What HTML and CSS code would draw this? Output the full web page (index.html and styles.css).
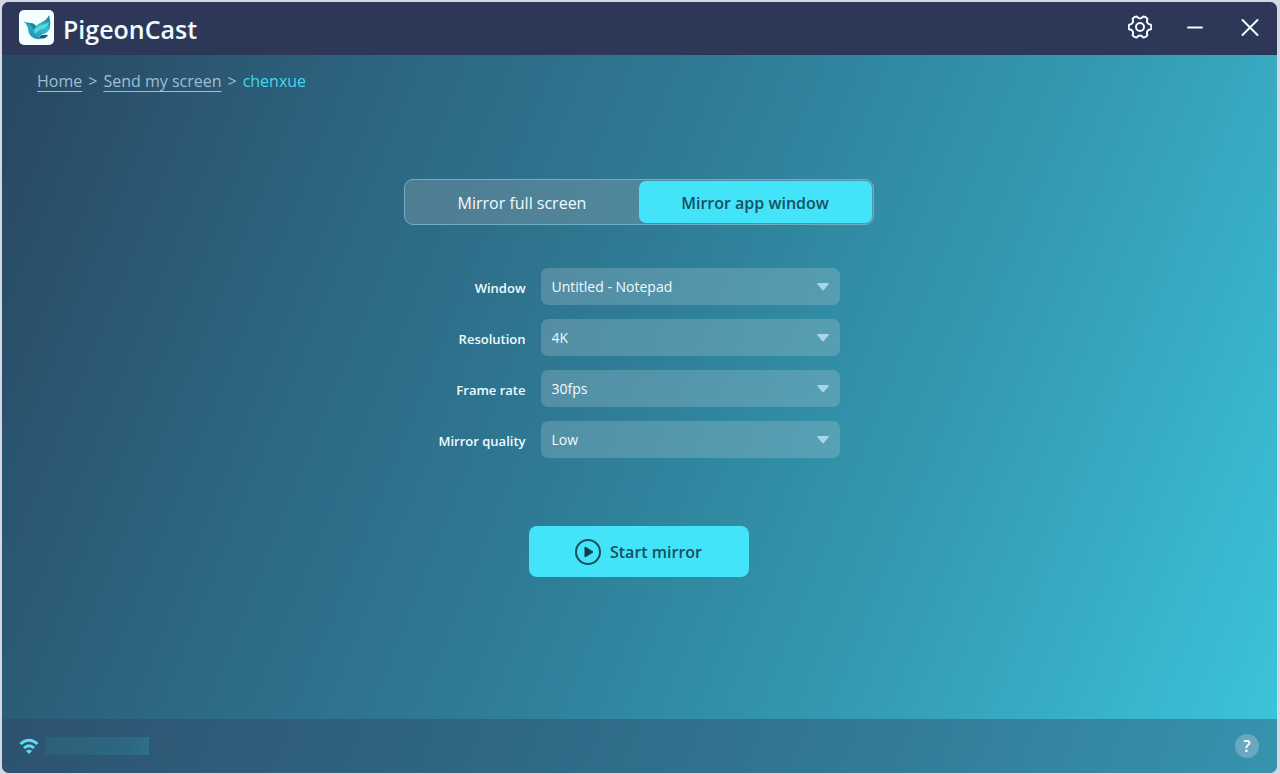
FILE: index.html
```
<!DOCTYPE html>
<html lang="en">
<head>
    <meta charset="UTF-8">
    <meta name="viewport" content="width=device-width, initial-scale=1.0">
    <title>PigeonCast</title>
    <link rel="stylesheet" href="styles.css">
</head>
<body>
    <div class="window">
        <header class="titlebar">
            <div class="brand">
                <svg class="logo" viewBox="0 0 35 35" aria-hidden="true">
                    <defs>
                        <linearGradient id="bird" x1="1" y1="0" x2="0.3" y2="1">
                            <stop offset="0" stop-color="#1a6f92"/>
                            <stop offset="0.45" stop-color="#36bccd"/>
                            <stop offset="1" stop-color="#1f8fac"/>
                        </linearGradient>
                    </defs>
                    <rect width="35" height="35" rx="5" fill="#f3feff"/>
                    <path d="M4 11q3 2 7 2 4 0 6 3 2-2 6-4 5-2 7-7 2 7 1 13-2 5-7 6-4 2-4 4 1 1 3 1-9 1-12-4-2-3-2-7-1-4-5-7z" fill="url(#bird)"/>
                    <path d="M4 11q3 2 7 2 4 0 6 3l-2 4q-3-6-11-9z" fill="#1c86a3"/>
                    <path d="M15 20q3-4 8-5 4-1 7-3-1 4-4 6-7 2-10 6-1-2-1-4z" fill="#5ad5de"/>
                    <path d="M20 28q1-4 9-3-3 5-9 3z" fill="#185b78"/>
                </svg>
                <h1>PigeonCast</h1>
            </div>
            <div class="window-buttons">
                <button type="button" aria-label="Settings">
                    <svg width="24" height="24" viewBox="0 0 24 24">
                        <path d="M22.86 9.69Q23.9 12 22.86 14.31 17.54 15.2 19.43 20.25 17.95 22.3 15.43 22.56 12 18.4 8.57 22.56 6.05 22.3 4.57 20.25 6.46 15.2 1.14 14.31.1 12 1.14 9.69 6.46 8.8 4.57 3.75 6.05 1.7 8.57 1.44 12 5.6 15.43 1.44 17.95 1.7 19.43 3.75 17.54 8.8 22.86 9.69z"/>
                        <circle cx="12" cy="12" r="4"/>
                    </svg>
                </button>
                <button type="button" aria-label="Minimize">
                    <svg width="24" height="24" viewBox="0 0 24 24"><path d="M5 12.500h14"/></svg>
                </button>
                <button type="button" aria-label="Close">
                    <svg width="24" height="24" viewBox="0 0 24 24"><path d="M4.500 5l15 15M19.500 5l-15 15"/></svg>
                </button>
            </div>
        </header>

        <main class="content">
            <nav class="breadcrumb" aria-label="Breadcrumb">
                <a href="#">Home</a>
                <span>&gt;</span>
                <a href="#">Send my screen</a>
                <span>&gt;</span>
                <span class="current">chenxue</span>
            </nav>

            <form class="mirror-form">
                <div class="tabs">
                    <button type="button">Mirror full screen</button>
                    <button type="button" class="active">Mirror app window</button>
                </div>

                <div class="fields">
                    <label for="window">Window</label>
                    <div class="select">
                        <select id="window"><option>Untitled - Notepad</option></select>
                        <svg width="12" height="8" viewBox="0 0 12 8"><path d="M1 0h10q1 0 .5 1.200l-4.500 5.500q-1 1-2 0L.5 1.200Q0 0 1 0z"/></svg>
                    </div>
                    <label for="resolution">Resolution</label>
                    <div class="select">
                        <select id="resolution"><option>4K</option></select>
                        <svg width="12" height="8" viewBox="0 0 12 8"><path d="M1 0h10q1 0 .5 1.200l-4.500 5.500q-1 1-2 0L.5 1.200Q0 0 1 0z"/></svg>
                    </div>
                    <label for="framerate">Frame rate</label>
                    <div class="select">
                        <select id="framerate"><option>30fps</option></select>
                        <svg width="12" height="8" viewBox="0 0 12 8"><path d="M1 0h10q1 0 .5 1.200l-4.500 5.500q-1 1-2 0L.5 1.200Q0 0 1 0z"/></svg>
                    </div>
                    <label for="quality">Mirror quality</label>
                    <div class="select">
                        <select id="quality"><option>Low</option></select>
                        <svg width="12" height="8" viewBox="0 0 12 8"><path d="M1 0h10q1 0 .5 1.200l-4.500 5.500q-1 1-2 0L.5 1.200Q0 0 1 0z"/></svg>
                    </div>
                </div>

                <button type="button" class="start">
                    <svg width="26" height="26" viewBox="0 0 26 26" aria-hidden="true">
                        <circle cx="13" cy="13" r="12"/>
                        <path d="M10 8v10l8-5z"/>
                    </svg>
                    Start mirror
                </button>
            </form>
        </main>

        <footer class="statusbar">
            <div class="network">
                <svg width="20" height="16" viewBox="0 0 20 16" aria-hidden="true">
                    <path d="M1.500 6q8.500-7.500 17 0M5 10q5-4.500 10 0"/>
                    <path class="dot" d="M7 13q3-2.500 6 0l-3 3z"/>
                </svg>
                <span class="network-name"></span>
            </div>
            <button type="button" class="help" aria-label="Help">?</button>
        </footer>
    </div>
</body>
</html>
```
FILE: styles.css
```
* {
    box-sizing: border-box;
}
body {
    margin: 0;
    padding: 2px 3px 1px 2px;
    min-height: 100vh;
    display: flex;
    background-color: #d5d8e2;
    font-family: "Open Sans", "Noto Sans", sans-serif;
    color: #f0fbff;
}
button, select {
    font-family: inherit;
    color: inherit;
    border: none;
    background: none;
    padding: 0;
    cursor: pointer;
}
.window {
    flex: 1;
    display: flex;
    flex-direction: column;
    border-radius: 7px;
    overflow: hidden;
    background: linear-gradient(112deg, #294a64 4%, #2d6682 27%, #2f7c96 48%, #349bb2 72%, #3cc4db 99%);
}
.titlebar {
    height: 53px;
    display: flex;
    justify-content: space-between;
    align-items: center;
    padding: 0 15px 2px 17px;
    background-color: #2d3859;
}
.brand {
    display: flex;
    align-items: center;
    gap: 9px;
}
.logo {
    width: 35px;
    height: 35px;
}
h1 {
    margin: 0;
    padding-top: 2px;
    font-size: 25px;
    line-height: 32px;
    font-weight: 600;
}
.window-buttons {
    display: flex;
    gap: 31px;
    padding-bottom: 2px;
}
.window-buttons button {
    width: 24px;
    height: 24px;
}
.window-buttons svg {
    display: block;
    fill: none;
    stroke: #f0fbff;
    stroke-width: 2;
    stroke-linejoin: round;
    stroke-linecap: round;
}
.content {
    flex: 1;
    padding: 14px 37px 14px 35px;
}
.breadcrumb {
    display: flex;
    gap: 6px;
    font-size: 16px;
    line-height: 24px;
    color: #9fbfd0;
}
.breadcrumb a {
    color: inherit;
    text-decoration: underline;
    text-decoration-thickness: 1px;
    text-underline-offset: 4px;
}
.breadcrumb .current {
    color: #3fd9ee;
}
.mirror-form {
    display: flex;
    flex-direction: column;
    align-items: center;
    padding-top: 86px;
}
.tabs {
    display: flex;
    width: 470px;
    height: 46px;
    padding: 1px;
    border: 1px solid #6eafc2;
    border-radius: 9px;
    background-color: rgba(160, 170, 180, 0.3);
}
.tabs button {
    flex: 1;
    padding-top: 2px;
    border-radius: 7px;
    font-size: 16px;
}
.tabs .active {
    background-color: #43e3fa;
    color: #17505f;
    font-weight: 600;
}
.fields {
    display: grid;
    grid-template-columns: 122px 299px;
    column-gap: 15px;
    row-gap: 14px;
    align-items: center;
    margin-top: 43px;
    margin-right: 34px;
}
.fields label {
    padding-top: 2px;
    text-align: right;
    font-size: 13px;
    font-weight: 600;
    white-space: nowrap;
}
.select {
    display: flex;
    align-items: center;
    height: 37px;
    padding-right: 11px;
    border-radius: 7px;
    background-color: rgba(180, 205, 215, 0.28);
}
.select select {
    appearance: none;
    flex: 1;
    height: 100%;
    padding: 0 11px;
    font-size: 14px;
}
.select option {
    color: #17505f;
}
.select svg {
    fill: #a9d6e6;
    pointer-events: none;
}
.start {
    display: flex;
    justify-content: center;
    align-items: center;
    gap: 9px;
    width: 220px;
    height: 51px;
    margin-top: 68px;
    border-radius: 8px;
    background-color: #43e3fa;
    color: #17505f;
    font-size: 16px;
    font-weight: 600;
}
.start circle {
    fill: none;
    stroke: #17505f;
    stroke-width: 2;
}
.start path {
    fill: #123c48;
    stroke: #123c48;
    stroke-linejoin: round;
}
.statusbar {
    height: 54px;
    display: flex;
    justify-content: space-between;
    align-items: center;
    padding: 0 18px 0 17px;
    background-color: rgba(48, 65, 100, 0.38);
}
.network {
    display: flex;
    align-items: center;
    gap: 6px;
}
.network svg {
    fill: none;
    stroke: #5fdcf3;
    stroke-width: 3;
}
.network .dot {
    fill: #5fdcf3;
    stroke: none;
}
.network-name {
    width: 104px;
    height: 18px;
    background: linear-gradient(90deg, #2d5f7b, #2d6680 75%, #2f7087);
}
.help {
    width: 24px;
    height: 24px;
    border-radius: 50%;
    background-color: #6aa8c0;
    color: #ffffff;
    font-size: 16px;
    font-weight: 600;
    line-height: 24px;
}
```
